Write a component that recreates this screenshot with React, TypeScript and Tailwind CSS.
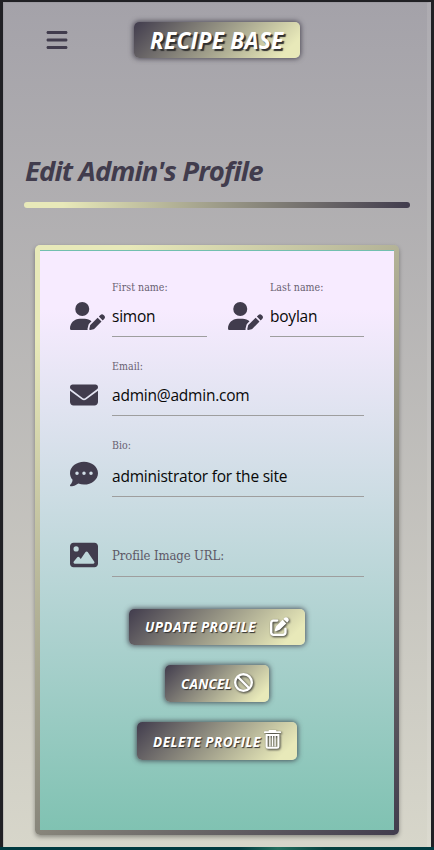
import type { ReactNode } from "react";
import {
  FaBan,
  FaBars,
  FaCommentDots,
  FaEnvelope,
  FaImage,
  FaPenToSquare,
  FaUserPen,
} from "react-icons/fa6";

const heading = "font-['Open_Sans','Noto_Sans',sans-serif] italic whitespace-nowrap";
const glossy =
  "flex rounded-[5px] bg-[linear-gradient(135deg,#413c4d_0%,#e8e9b9_90%)] text-white shadow-[0_0_5px_1px_rgba(45,42,55,0.7)]";

function TrashIcon() {
  return (
    <svg viewBox="0 0 17 19" className="h-[19px] w-[17px]" fill="none" stroke="currentColor">
      <path d="M0.8 2.2H16.2M5.5 1H11.5" strokeWidth="1.8" strokeLinecap="round" />
      <path d="M2.6 5V16.4Q2.6 17.8 4 17.8H13Q14.4 17.8 14.4 16.4V5Z" strokeWidth="2" />
      <path d="M5.9 6V16.5M8.5 6V16.5M11.1 6V16.5" strokeWidth="1.3" />
    </svg>
  );
}

function Field({
  icon,
  label,
  value,
  className,
  valueClass = "mt-[11px]",
}: {
  icon: ReactNode;
  label: string;
  value?: string;
  className: string;
  valueClass?: string;
}) {
  return (
    <div className={`flex ${className}`}>
      <div className="w-[42px] shrink-0 pt-[22px] text-[28px] text-[#413c4d]">{icon}</div>
      <label className="flex grow flex-col border-b border-[#9e9e9e] whitespace-nowrap">
        {value ? (
          <>
            <span className="h-[14px] font-['DejaVu_Serif_Condensed','DejaVu_Serif',serif] text-[10.5px] leading-[14px] tracking-[0.05px] text-[#686071]">
              {label}
            </span>
            <span
              className={`${valueClass} font-['Open_Sans','Noto_Sans',sans-serif] text-[15.5px] leading-[22px] tracking-[-0.22px] text-[#080808]`}
            >
              {value}
            </span>
          </>
        ) : (
          <span className="mt-[27px] font-['DejaVu_Serif_Condensed','DejaVu_Serif',serif] text-[13px] leading-[20px] tracking-[-0.12px] text-[#5d5867]">
            {label}
          </span>
        )}
      </label>
    </div>
  );
}

function ActionButton({
  text,
  icon,
  className,
  textClass,
}: {
  text: string;
  icon: ReactNode;
  className: string;
  textClass: string;
}) {
  return (
    <button className={`${glossy} ${className} pl-[16px]`}>
      <span
        className={`${heading} ${textClass} shrink-0 text-left text-[13.5px] font-bold [text-shadow:1px_1px_1px_#303030]`}
      >
        {text}
      </span>
      <span className="pt-[8px] text-[19px] drop-shadow-[1px_1px_1px_#303030]">{icon}</span>
    </button>
  );
}

export default function App() {
  return (
    <div className="h-[850px] w-[434px] overflow-hidden bg-[linear-gradient(90deg,#003a40_0%,#003a40_55%,#24705f_64%,#07413f_75%,#003a40_100%)]">
      <div className="h-[847px] border-t-2 border-r-[3px] border-l-[3px] border-[#202024] bg-[linear-gradient(180deg,#a4a2a9_0%,#d7d6ca_100%)]">
        <div className="flex h-full flex-col border-t border-l border-[#8d8b92]/30 border-r-4 border-r-white/10">
          <header className="flex h-[56px] items-start pt-[19px] pl-[42px]">
            <FaBars className="mt-[6px] h-[24px] w-[22px] text-[#413c4d]" />
            <div className={`${glossy} ml-[66px] h-[36px] w-[166px] pl-[16px]`}>
              <h1
                className={`${heading} text-[22.5px] leading-[37px] font-bold tracking-[0.25px] [text-shadow:2px_2px_1px_#303030]`}
              >
                RECIPE BASE
              </h1>
            </div>
          </header>
          <h2
            className={`${heading} mt-[93px] ml-[21px] h-[50px] text-[27.5px] leading-[38px] font-bold tracking-[-0.85px] text-[#413c4d]`}
          >
            Edit Admin's Profile
          </h2>
          <div className="ml-[20px] h-[6px] w-[386px] shrink-0 rounded-[3px] bg-[linear-gradient(90deg,#e8e9b9_10%,#413c4d_100%)]" />

          <section className="mt-[37px] ml-[31px] h-[590px] w-[364px] shrink-0 rounded-[5px] bg-[linear-gradient(135deg,#e8e9b9_10%,#413c4d_100%)] p-[5px] shadow-[0_2px_4px_rgba(0,0,0,0.35)]">
            <form className="flex h-full flex-col border-t border-[#72bfaf] bg-[linear-gradient(180deg,#f7ebff_10%,#80c2b2_100%)] pt-[29px] pr-[30px] pl-[30px]">
              <div className="flex justify-between">
                <Field icon={<FaUserPen className="w-[35px]" />} label="First name:" value="simon" className="h-[57px] w-[137px]" />
                <Field icon={<FaUserPen className="w-[35px]" />} label="Last name:" value="boylan" className="h-[57px] w-[136px]" />
              </div>
              <Field icon={<FaEnvelope />} label="Email:" value="admin@admin.com" className="mt-[22px] h-[57px]" />
              <Field icon={<FaCommentDots />} label="Bio:" value="administrator for the site" className="mt-[22px] h-[59px]" valueClass="mt-[13px]" />
              <Field icon={<FaImage />} label="Profile Image URL:" className="mt-[22px] h-[58px]" />
              <div className="mt-[32px] flex flex-col items-center">
                <ActionButton text="UPDATE PROFILE" icon={<FaPenToSquare />} className="h-[36px] w-[176px]" textClass="w-[125px] leading-[37px] tracking-[0.4px]" />
                <ActionButton text="CANCEL" icon={<FaBan />} className="mt-[20px] h-[37px] w-[104px]" textClass="w-[53px] leading-[39px] tracking-[0.2px]" />
                <ActionButton text="DELETE PROFILE" icon={<TrashIcon />} className="mt-[20px] h-[38px] w-[160px]" textClass="w-[111px] leading-[41px] tracking-[0.5px]" />
              </div>
            </form>
          </section>
        </div>
      </div>
    </div>
  );
}
